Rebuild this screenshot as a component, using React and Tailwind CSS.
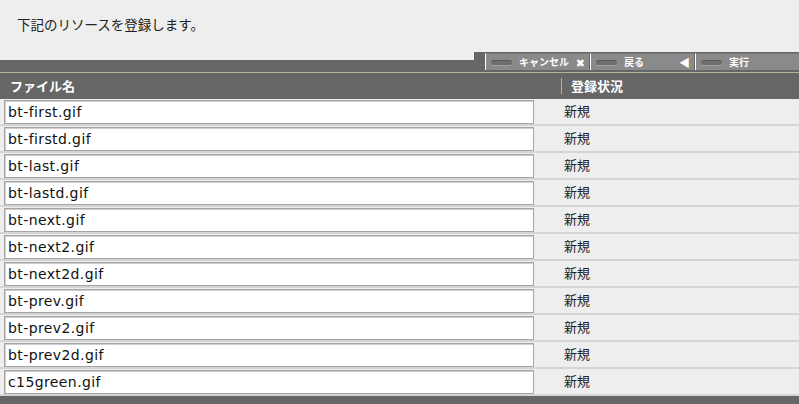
const files = [
  "bt-first.gif",
  "bt-firstd.gif",
  "bt-last.gif",
  "bt-lastd.gif",
  "bt-next.gif",
  "bt-next2.gif",
  "bt-next2d.gif",
  "bt-prev.gif",
  "bt-prev2.gif",
  "bt-prev2d.gif",
  "c15green.gif",
];

function Pill() {
  return (
    <span className="inline-block w-[21px] h-[5px] rounded-full bg-[#6e6e6e] border-t border-[#5a5a5a] shadow-[0_1px_0_#a0a0a0]" />
  );
}

function Btn({ label, icon }) {
  return (
    <div className="flex h-[17px] flex-1 items-center border-l border-white bg-[#8a8a8a] border-t border-t-[#777] pl-[5px] pr-[4px]">
      <Pill />
      <span className="ml-[7px] text-[10px] font-bold text-white leading-none">{label}</span>
      <span className="ml-auto text-white text-[11px] leading-none font-bold">{icon}</span>
    </div>
  );
}

export default function App() {
  const jp = { fontFamily: '"Noto Sans CJK JP", "DejaVu Sans", sans-serif' };
  return (
    <div className="w-[799px] h-[404px] overflow-hidden bg-[#eeeeee]" style={jp}>
      <div className="h-[52px] pl-[17px] pt-[14px] text-[13.5px] text-[#222] leading-[20px]">
        下記のリソースを登録します。
      </div>
      <div className="flex h-[20px]">
        <div className="flex-1 flex flex-col">
          <div className="h-[8px] bg-[#eeeeee]" />
          <div className="flex-1 bg-[#666666]" />
        </div>
        <div className="w-[325px] bg-[#666666] flex items-start pt-[1px] pl-[11px] gap-[1px]">
          <Btn label="キャンセル" icon="✖" />
          <Btn label="戻る" icon="◀" />
          <Btn label="実行" icon="" />
        </div>
      </div>
      <div className="h-[1px] bg-[#a9b99c]" />
      <div className="h-[26px] bg-[#666666] flex items-center text-white font-bold text-[13px]">
        <div className="w-[561px] pl-[10px]">ファイル名</div>
        <div className="w-[1px] h-[16px] bg-[#a9b99c]" />
        <div className="pl-[9px]">登録状況</div>
      </div>
      {files.map((f) => (
        <div key={f} className="h-[27px] flex items-center border-b-2 border-[#d4d4d4]">
          <div className="ml-[4px] w-[530px] h-[24px] bg-white border border-[#a5a5a5] shadow-[inset_1px_1px_0_#cfcfcf] flex items-center pl-[3px] pt-[2px] text-[14px] tracking-[0.4px] text-[#111]" style={{ fontFamily: '"DejaVu Sans", sans-serif' }}>
            {f}
          </div>
          <div className="ml-[30px] pb-[2px] text-[13px] text-[#222]">新規</div>
        </div>
      ))}
      <div className="h-[20px] bg-[#666666]" />
    </div>
  );
}
